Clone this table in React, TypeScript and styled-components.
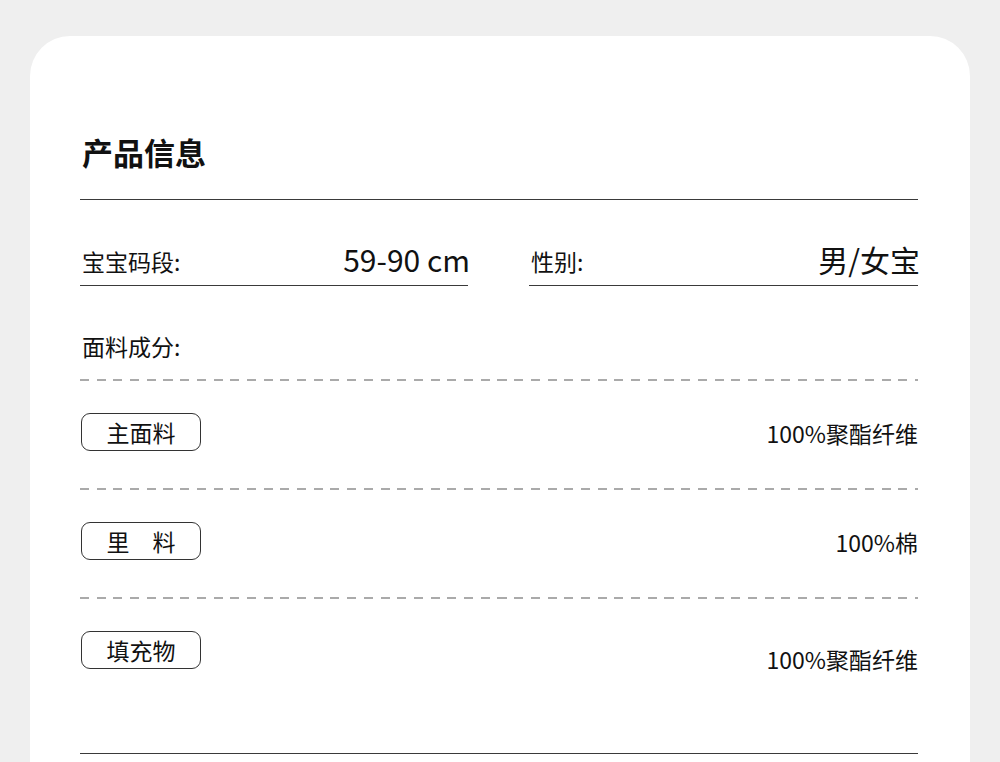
import React from "react";
import styled, { createGlobalStyle } from "styled-components";

const Global = createGlobalStyle`
  html, body {
    margin: 0;
    padding: 0;
    background: #efefef;
    height: 762px;
    overflow: hidden;
  }
  body {
    font-family: "Noto Sans CJK SC", "Noto Sans", sans-serif;
    color: #111;
  }
`;

const Page = styled.div`
  padding: 36px 30px 0 30px;
`;

const Card = styled.section`
  background: #fff;
  border-radius: 40px;
  padding: 96px 52px 40px 50px;
  min-height: 800px;
  box-sizing: border-box;
`;

const Title = styled.h1`
  margin: 0;
  font-size: 31px;
  font-weight: 700;
  line-height: 40px;
  padding-left: 2px;
  padding-bottom: 27px;
  border-bottom: 1px solid #3a3a3a;
`;

const InfoGrid = styled.div`
  display: grid;
  grid-template-columns: 388px 389px;
  column-gap: 61px;
`;

const InfoCell = styled.div`
  display: flex;
  align-items: center;
  justify-content: space-between;
  height: 40px;
  padding: 41px 0 4px 0;
  border-bottom: 1px solid #3a3a3a;
`;

const Label = styled.span`
  font-size: 23px;
  line-height: 30px;
  padding-left: 2px;
`;

const BigValue = styled.span`
  font-size: 30px;
  line-height: 40px;
  margin-top: -4px;
  margin-right: -2px;
`;

const SectionLabel = styled.div`
  font-size: 23px;
  line-height: 30px;
  padding: 45px 0 18px 2px;
`;

const Dashed = styled.div`
  height: 2px;
  background: repeating-linear-gradient(
    to right,
    #aaaaaa 0 9px,
    transparent 9px 16.7px
  );
`;

const CompRow = styled.div<{ $bottom: number }>`
  display: flex;
  align-items: flex-start;
  justify-content: space-between;
  padding: 32px 0 ${(p) => p.$bottom}px 1px;
`;

const Pill = styled.div`
  width: 120px;
  height: 38px;
  box-sizing: border-box;
  border: 1px solid #333;
  border-radius: 9px;
  display: flex;
  align-items: center;
  justify-content: center;
  font-size: 23px;
  line-height: 30px;
  white-space: pre;
`;

const CompValue = styled.span<{ $shift: number }>`
  font-size: 23px;
  line-height: 30px;
  margin-top: ${(p) => 5 + p.$shift}px;
`;

const BottomRule = styled.div`
  border-top: 1px solid #3a3a3a;
`;

const comps = [
  { name: "主面料", value: "100%聚酯纤维", shift: 0, bottom: 37 },
  { name: "里　料", value: "100%棉", shift: 0, bottom: 37 },
  { name: "填充物", value: "100%聚酯纤维", shift: 8, bottom: 79 },
];

export default function App() {
  return (
    <Page>
      <Global />
      <Card>
        <Title>产品信息</Title>
        <InfoGrid>
          <InfoCell>
            <Label>宝宝码段:</Label>
            <BigValue>59-90 cm</BigValue>
          </InfoCell>
          <InfoCell>
            <Label>性别:</Label>
            <BigValue>男/女宝</BigValue>
          </InfoCell>
        </InfoGrid>
        <SectionLabel>面料成分:</SectionLabel>
        {comps.map((c, i) => (
          <React.Fragment key={i}>
            <Dashed />
            <CompRow $bottom={c.bottom}>
              <Pill>{c.name}</Pill>
              <CompValue $shift={c.shift}>{c.value}</CompValue>
            </CompRow>
          </React.Fragment>
        ))}
        <BottomRule />
      </Card>
    </Page>
  );
}
